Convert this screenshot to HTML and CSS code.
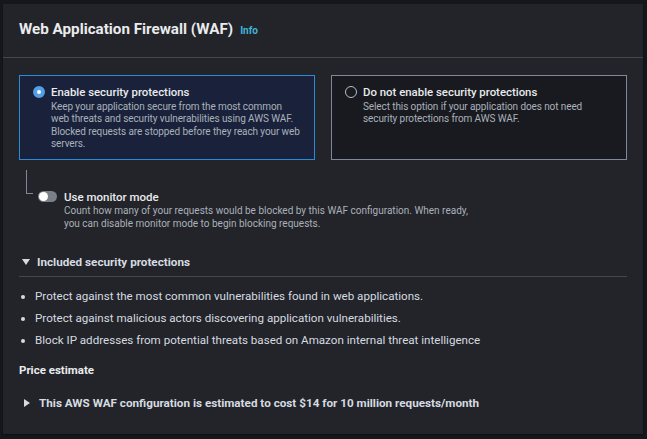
FILE: index.html
```html
<!DOCTYPE html>
<html>
<head>
<meta charset="utf-8">
<link rel="stylesheet" href="styles.css">
</head>
<body>
<div class="panel">
  <div class="header">
    <h2 class="title">Web Application Firewall (WAF)</h2>
    <span class="info">Info</span>
  </div>
  <div class="content">
    <div class="tiles">
      <div class="tile selected">
        <span class="radio checked"></span>
        <div class="tile-text">
          <div class="tile-title">Enable security protections</div>
          <div class="tile-desc">Keep your application secure from the most common web threats and security vulnerabilities using AWS WAF. Blocked requests are stopped before they reach your web servers.</div>
        </div>
      </div>
      <div class="tile">
        <span class="radio"></span>
        <div class="tile-text">
          <div class="tile-title">Do not enable security protections</div>
          <div class="tile-desc">Select this option if your application does not need security protections from AWS WAF.</div>
        </div>
      </div>
    </div>
    <div class="monitor">
      <span class="connector"></span>
      <span class="toggle"><span class="knob"></span></span>
      <div class="monitor-text">
        <div class="monitor-title">Use monitor mode</div>
        <div class="monitor-desc">Count how many of your requests would be blocked by this WAF configuration. When ready, you can disable monitor mode to begin blocking requests.</div>
      </div>
    </div>
    <div class="expander open">
      <span class="caret-down"></span>
      <span class="exp-label">Included security protections</span>
    </div>
    <ul class="bullets">
      <li>Protect against the most common vulnerabilities found in web applications.</li>
      <li>Protect against malicious actors discovering application vulnerabilities.</li>
      <li>Block IP addresses from potential threats based on Amazon internal threat intelligence</li>
    </ul>
    <div class="price-label">Price estimate</div>
    <div class="expander closed">
      <span class="caret-right"></span>
      <span class="exp-label">This AWS WAF configuration is estimated to cost $14 for 10 million requests/month</span>
    </div>
  </div>
</div>
</body>
</html>
```
FILE: styles.css
```css
* { box-sizing: border-box; }
html, body { margin: 0; padding: 0; }
body {
  background: #16171b;
  width: 647px;
  height: 439px;
  padding: 4px 4px 5px 3px;
  font-family: Roboto, "Open Sans", sans-serif;
  color: #d5dbe0;
}
.panel {
  background: #232429;
  height: 430px;
  box-shadow: 0 1px 2px rgba(0,0,0,0.4);
}
.header {
  height: 54px;
  display: flex;
  align-items: center;
  padding-left: 16px;
  padding-bottom: 4px;
  border-bottom: 1px solid #414750;
}
.title {
  margin: 0;
  font-size: 15.2px;
  font-weight: 700;
  color: #e9ebed;
  letter-spacing: 0;
}
.info {
  margin-left: 7px;
  margin-top: 3px;
  font-size: 10px;
  font-weight: 700;
  color: #42b4d8;
}
.content {
  padding: 17px 16px 0 16px;
}
.tiles {
  display: flex;
  gap: 16px;
}
.tile {
  flex: 1;
  height: 85px;
  border: 1px solid #7d8998;
  background: #181a20;
  display: flex;
  align-items: flex-start;
  padding: 8px 14px 0 13px;
}
.tile.selected {
  border-color: #2a8bd8;
  background: #19223a;
}
.radio {
  width: 12px;
  height: 12px;
  border-radius: 50%;
  border: 1.5px solid #b6bec9;
  flex: none;
  margin-top: 2px;
  margin-right: 6px;
}
.radio.checked {
  border: 4px solid #539fe5;
  background: #ffffff;
}
.tile-title {
  font-size: 11.4px;
  font-weight: 500;
  color: #e9ebed;
  line-height: 16px;
}
.tile-desc {
  font-size: 10px;
  letter-spacing: -0.1px;
  line-height: 12.3px;
  color: #aab1bb;
  margin-top: 1px;
}
.monitor {
  display: flex;
  align-items: flex-start;
  margin-top: 10px;
  padding-left: 7px;
  height: 79px;
}
.connector {
  width: 7px;
  height: 24px;
  border-left: 1px solid #7d8998;
  border-bottom: 1px solid #7d8998;
  flex: none;
  margin-top: 0;
  margin-right: 5px;
}
.toggle {
  flex: none;
  width: 19px;
  height: 11px;
  border-radius: 6px;
  background: #7b7f87;
  margin-top: 21px;
  margin-right: 7px;
  position: relative;
}
.knob {
  position: absolute;
  left: 1px;
  top: 1px;
  width: 9px;
  height: 9px;
  border-radius: 50%;
  background: #ffffff;
}
.monitor-text { margin-top: 19px; }
.monitor-title {
  font-size: 11.5px;
  font-weight: 500;
  color: #e9ebed;
  line-height: 16px;
}
.monitor-desc {
  font-size: 10px;
  line-height: 12.5px;
  color: #aab1bb;
  margin-top: 0;
  width: 420px;
}
.expander {
  display: flex;
  align-items: center;
}
.expander.open {
  height: 28px;
  border-bottom: 1px solid #414750;
  padding-left: 3px;
  padding-bottom: 2px;
}
.caret-down {
  width: 0; height: 0;
  border-left: 4.5px solid transparent;
  border-right: 4.5px solid transparent;
  border-top: 6px solid #d5dbe0;
  margin-right: 7px;
  margin-top: 1px;
}
.caret-right {
  width: 0; height: 0;
  border-top: 4.5px solid transparent;
  border-bottom: 4.5px solid transparent;
  border-left: 6px solid #d5dbe0;
  margin-right: 9px;
  margin-left: 2px;
}
.exp-label {
  font-size: 11.7px;
  font-weight: 700;
  color: #d5dbe0;
}
.bullets {
  margin: 8px 0 0 0;
  padding-left: 16px;
  font-size: 11.6px;
  color: #d5dbe0;
}
.bullets li {
  line-height: 22px;
}
.price-label {
  margin-top: 11px;
  font-size: 11.5px;
  font-weight: 700;
  color: #e9ebed;
  line-height: 16px;
}
.expander.closed {
  margin-top: 18px;
  padding-left: 3px;
}
```
